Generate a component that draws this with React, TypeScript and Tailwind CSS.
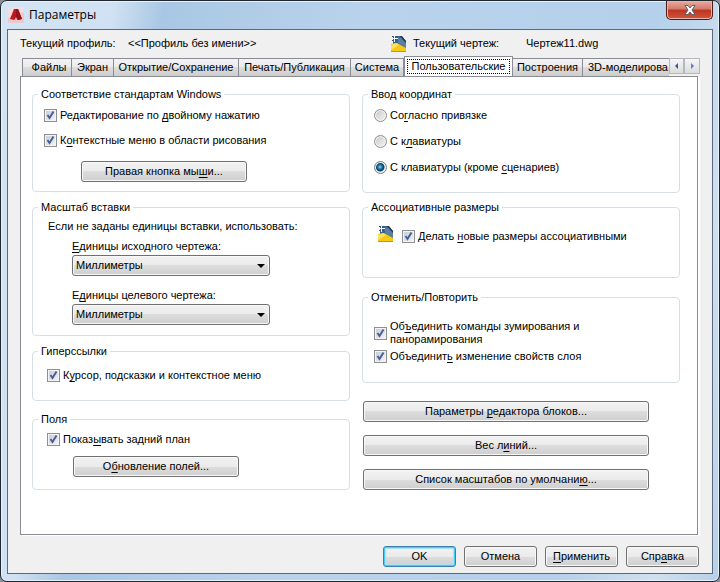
import React from "react";

const tabs = [
  { label: "Файлы", className: "w-[50px] pl-1" },
  { label: "Экран", className: "w-[42px]" },
  { label: "Открытие/Сохранение", className: "w-[125px]" },
  { label: "Печать/Публикация", className: "w-[112px]" },
  { label: "Система", className: "w-[53px]" },
  { label: "Пользовательские", className: "w-[109px]", active: true },
  { label: "Построения", className: "w-[70px]" },
  { label: "3D-моделирова", className: "grow pl-1" },
];

const DrawingIcon = () => (
  <svg width="16" height="17" viewBox="0 0 16 17" className="shrink-0" aria-hidden="true">
    <path d="M2 1h8l5 5v9H2z" fill="#3f648c" />
    <path d="M7 3h4l4 4v6L7 8z" fill="#5a7fa6" />
    <path d="M9 1h2l4 5v2l-3-3z" fill="#24384f" />
    <path d="M3.500 0v7M0 3.500h7" stroke="#f2f8fc" />
    <path d="M1 1l5 5M6 1L1 6" stroke="#2f5078" />
    <path d="M3 3h1v1H3z" fill="#fff" />
    <path d="M0 9l6-1 9 5v4H0z" fill="#f6c915" />
    <path d="M0 10l5-2 3 2-8 5z" fill="#fbe160" />
    <path d="M0 16h15v1H0z" fill="#c8960c" />
  </svg>
);

// Letter that Alt activates
const Key = ({ children }: { children: string }) => (
  <span className="underline underline-offset-2">{children}</span>
);

interface GroupProps {
  title: string;
  className: string;
  children: React.ReactNode;
}

const Group: React.FC<GroupProps> = ({ title, className, children }) => {
  return (
    <fieldset className={`min-w-0 rounded-[4px] border border-[#d5dfe5] ${className}`}>
      <legend className="ml-[5px] h-[14px] pr-[3px] pl-[3px] leading-[14px]">{title}</legend>
      {children}
    </fieldset>
  );
};

interface CheckProps {
  className?: string;
  children: React.ReactNode;
}

const Check: React.FC<CheckProps> = ({ className = "", children }) => {
  return (
    <label className={`flex items-center gap-[3px] ${className}`}>
      <span className="grid shrink-0">
        <input
          type="checkbox"
          defaultChecked
          className="peer col-start-1 row-start-1 size-[13px] appearance-none border border-[#8e8f8f] bg-linear-to-br from-[#c3cbd6] to-[#f6f6f6] shadow-[inset_0_0_0_1px_#f4f4f4]"
        />
        <svg
          viewBox="0 0 13 13"
          className="pointer-events-none invisible col-start-1 row-start-1 size-[13px] peer-checked:visible"
        >
          <path d="M3.500 6L5.500 9L9.500 2.500" fill="none" stroke="#4a5f97" strokeWidth="2" />
        </svg>
      </span>
      <span>{children}</span>
    </label>
  );
};

interface RadioProps {
  checked?: boolean;
  children: React.ReactNode;
}

const Radio: React.FC<RadioProps> = ({ checked, children }) => {
  return (
    <label className="flex items-center gap-[3px]">
      <input
        type="radio"
        name="coords"
        defaultChecked={checked}
        className="size-[13px] appearance-none rounded-full border border-[#8e8f8f] bg-linear-to-br from-[#c6c9cd] to-[#f4f4f4] shadow-[inset_0_0_0_1px_#f4f4f4] checked:border-[#6c7f8e] checked:bg-[radial-gradient(circle_at_5px_5px,#8fdcf8_0px,#1c7db0_2px,#0c3550_4px,#e8ecef_5px)]"
      />
      <span>{children}</span>
    </label>
  );
};

interface ButtonProps {
  className: string;
  primary?: boolean;
  children: React.ReactNode;
}

const Button: React.FC<ButtonProps> = ({ className, primary, children }) => {
  return (
    <button
      className={`h-[21px] rounded-[3px] border bg-[linear-gradient(#f2f2f2,#ebebeb_50%,#dddddd_50%,#cfcfcf)] ${
        primary
          ? "border-[#3c7fb1] shadow-[inset_0_0_0_1px_#48cdf3,inset_0_0_1px_2px_#a5e3f5]"
          : "border-[#707070] shadow-[inset_0_0_0_1px_#f8f8f8]"
      } ${className}`}
    >
      {children}
    </button>
  );
};

interface UnitsProps {
  id: string;
  label: React.ReactNode;
}

const Units: React.FC<UnitsProps> = ({ id, label }) => {
  return (
    <div className="ml-[39px] flex w-[198px] flex-col">
      <label htmlFor={id} className="mb-[2px]">
        {label}
      </label>
      <div className="grid">
        <select
          id={id}
          className="col-start-1 row-start-1 h-[21px] appearance-none rounded-[3px] border border-[#707070] bg-[linear-gradient(#f2f2f2,#ebebeb_50%,#dddddd_50%,#cfcfcf)] pl-[3px] shadow-[inset_0_0_0_1px_#f8f8f8]"
        >
          <option>Миллиметры</option>
          <option>Метры</option>
        </select>
        <svg
          width="8"
          height="4"
          viewBox="0 0 8 4"
          className="pointer-events-none col-start-1 row-start-1 mr-[5px] self-center justify-self-end"
        >
          <path d="M0 0h8L4 4z" fill="#000" />
        </svg>
      </div>
    </div>
  );
};

export default function App() {
  return (
    <div className="min-h-screen bg-[#8b9096]">
      <div className="flex min-h-screen flex-col rounded-[7px] border border-[#20262e] bg-[linear-gradient(100deg,#d3e4f4,#cfe1f2_14%,#a9c7e4_20%,#b9d3ec_45%,#b4d0ea_80%,#cfe0f0_92%,#b5d0ea)] px-[6px] pb-[7px] font-['Liberation_Sans',Arial,sans-serif] text-[11px] leading-[13px] text-black shadow-[inset_0_0_0_1px_#e8f2fb]">
        <header className="flex h-[28px] items-start justify-between">
          <div className="flex items-center gap-[5px] pt-[6px] pl-px">
            <svg width="16" height="16" viewBox="0 0 16 16" aria-hidden="true">
              <path d="M0 0h16v16H0z" fill="#ecc9cc" />
              <path d="M0 0h16v5L0 11z" fill="#f2dde0" />
              <path d="M6 2h4l4 10-4 1-2-2-2 2-4-1z" fill="#bd1a1f" />
              <path d="M8 2h2l4 10-4 1-2-2z" fill="#98121a" />
              <path d="M8 10l1 2-1 1-1-1z" fill="#e9a6a6" />
            </svg>
            <h1 className="font-['Open_Sans','Noto_Sans',sans-serif] text-[12px] leading-[16px]">
              Параметры
            </h1>
          </div>
          <button
            aria-label="Закрыть"
            className="flex h-[19px] w-[47px] items-center justify-center rounded-b-[5px] border border-t-0 border-[#4d1a18] bg-[linear-gradient(#e8aba0,#d27a6c_45%,#bd3420_50%,#d0553c)] shadow-[inset_0_0_0_1px_#eab5aa]"
          >
            <svg width="12" height="10" viewBox="0 0 12 10">
              <path
                d="M1 .5h3l2 2.500 2-2.500h3L8 5l3 4.500H8L6 7 4 9.500H1L4 5z"
                fill="#fff"
                stroke="#56606e"
              />
            </svg>
          </button>
        </header>

        <main className="flex grow flex-col border border-[#5b6a78] bg-[#f0f0f0] px-[12px] pb-[6px]">
          <div className="flex h-[26px] items-center">
            <span className="w-[108px]">Текущий профиль:</span>
            <span className="w-[263px]">&lt;&lt;Профиль без имени&gt;&gt;</span>
            <DrawingIcon />
            <span className="ml-[6px] w-[113px]">Текущий чертеж:</span>
            <span>Чертеж11.dwg</span>
          </div>

          <nav className="flex h-[20px] items-end">
            <div role="tablist" className="flex min-w-0 grow items-end pl-[2px]">
              {tabs.map((tab) => (
                <button
                  key={tab.label}
                  role="tab"
                  aria-selected={!!tab.active}
                  className={`shrink-0 whitespace-nowrap border border-b-0 border-[#898c95] last:border-r-0 ${
                    tab.active
                      ? "h-[20px] bg-white p-[2px] pb-[2px]"
                      : "h-[18px] border-l-0 bg-[linear-gradient(#f3f3f3,#ebebeb_50%,#dddddd_50%,#cdcdcd)] first:border-l"
                  } ${tab.className}`}
                >
                  {tab.active ? (
                    <span className="block h-full border border-dotted border-black leading-[12px]">
                      {tab.label}
                    </span>
                  ) : (
                    tab.label
                  )}
                </button>
              ))}
            </div>
            <div className="flex self-start pt-[2px]">
              <button
                aria-label="Назад"
                className="flex h-[16px] w-[15px] items-center justify-center border border-[#b5b8bf] bg-linear-to-b from-[#f6f6f6] to-[#dcdcdc]"
              >
                <svg width="3" height="6" viewBox="0 0 3 6">
                  <path d="M3 0v6L0 3z" fill="#3a5795" />
                </svg>
              </button>
              <button
                aria-label="Вперед"
                className="flex h-[16px] w-[16px] items-center justify-center border border-[#b5b8bf] bg-linear-to-b from-[#f6f6f6] to-[#dcdcdc]"
              >
                <svg width="3" height="6" viewBox="0 0 3 6">
                  <path d="M0 0v6L3 3z" fill="#5a7fc8" />
                </svg>
              </button>
            </div>
          </nav>

          <section className="mr-[2px] grid grow grid-cols-2 gap-x-[12px] border border-[#898c95] bg-white pt-[10px] pr-[17px] pl-[11px] shadow-[2px_1px_0_#fff]">
            <div className="flex flex-col gap-[8px]">
              <Group title="Соответствие стандартам Windows" className="h-[105px]">
                <Check className="mt-[8px] ml-[11px]">
                  Редактирование по <Key>д</Key>войному нажатию
                </Check>
                <Check className="mt-[12px] ml-[11px]">
                  К<Key>о</Key>нтекстные меню в области рисования
                </Check>
                <Button className="mt-[14px] ml-[48px] w-[166px]">
                  Правая кнопка мы<Key>ш</Key>и...
                </Button>
              </Group>

              <Group title="Масштаб вставки" className="h-[136px]">
                <p className="mt-[6px] mb-[7px] ml-[15px]">
                  Если не заданы единицы вставки, использовать:
                </p>
                <Units
                  id="source-units"
                  label={
                    <>
                      <Key>Е</Key>диницы исходного чертежа:
                    </>
                  }
                />
                <div className="h-[13px]" />
                <Units
                  id="target-units"
                  label={
                    <>
                      Е<Key>д</Key>иницы целевого чертежа:
                    </>
                  }
                />
              </Group>

              <Group title="Гиперссылки" className="h-[57px]">
                <Check className="mt-[11px] ml-[14px]">
                  К<Key>у</Key>рсор, подсказки и контекстное меню
                </Check>
              </Group>

              <Group title="Поля" className="mt-[3px] h-[78px]">
                <Check className="mt-[7px] ml-[14px]">
                  Показ<Key>ы</Key>вать задний план
                </Check>
                <Button className="mt-[10px] ml-[40px] w-[166px]">
                  О<Key>б</Key>новление полей...
                </Button>
              </Group>
            </div>

            <div className="flex flex-col">
              <Group title="Ввод координат" className="h-[106px]">
                <div className="mt-[8px] ml-[11px] flex flex-col gap-[13px]">
                  <Radio>
                    Со<Key>г</Key>ласно привязке
                  </Radio>
                  <Radio>
                    С к<Key>л</Key>авиатуры
                  </Radio>
                  <Radio checked>
                    С клавиатуры (кроме <Key>с</Key>ценариев)
                  </Radio>
                </div>
              </Group>

              <Group title="Ассоциативные размеры" className="mt-[7px] h-[78px]">
                <div className="mt-[10px] ml-[15px] flex items-center gap-[8px]">
                  <DrawingIcon />
                  <Check className="mt-[6px]">
                    Делать <Key>н</Key>овые размеры ассоциативными
                  </Check>
                </div>
              </Group>

              <Group title="Отменить/Повторить" className="mt-[12px] h-[93px]">
                <Check className="mt-[16px] ml-[11px]">
                  Об<Key>ъ</Key>единить команды зумирования и
                  <br />
                  панорамирования
                </Check>
                <Check className="mt-[4px] ml-[11px]">
                  Объединит<Key>ь</Key> изменение свойств слоя
                </Check>
              </Group>

              <div className="mt-[18px] mr-[31px] ml-px flex flex-col gap-[13px]">
                <Button className="w-full">
                  Параметры <Key>р</Key>едактора блоков...
                </Button>
                <Button className="w-full">
                  Вес л<Key>и</Key>ний...
                </Button>
                <Button className="w-full">
                  Список масштабов по умолчани<Key>ю</Key>...
                </Button>
              </div>
            </div>
          </section>

          <footer className="mt-[11px] mr-px flex justify-end gap-[8px]">
            <Button className="w-[73px]" primary>
              OK
            </Button>
            <Button className="w-[73px]">Отмена</Button>
            <Button className="w-[73px]">
              <Key>П</Key>рименить
            </Button>
            <Button className="w-[73px]">
              Спр<Key>а</Key>вка
            </Button>
          </footer>
        </main>
      </div>
    </div>
  );
}
